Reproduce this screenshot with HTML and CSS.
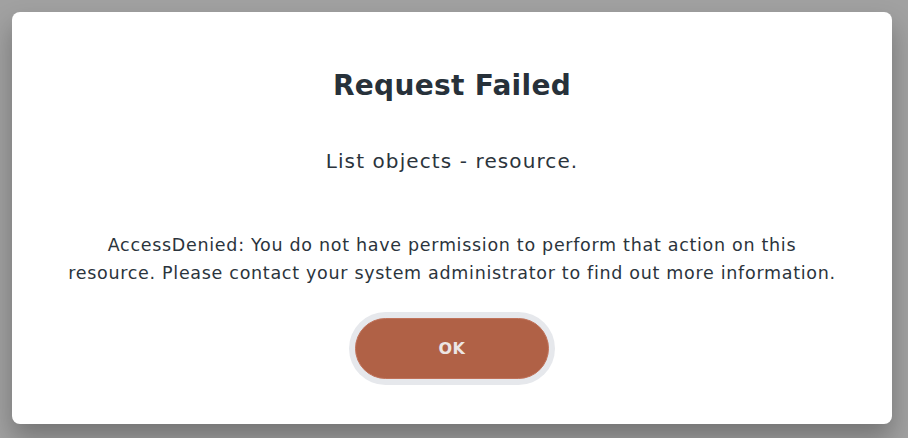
FILE: index.html
```html
<!DOCTYPE html>
<html lang="en">
<head>
<meta charset="utf-8">
<title>Request Failed</title>
<link rel="stylesheet" href="styles.css">
</head>
<body>
<div class="overlay">
  <div class="dialog" role="dialog">
    <h2 class="title">Request Failed</h2>
    <p class="subtitle">List objects - resource.</p>
    <p class="message">AccessDenied: You do not have permission to perform that action on this resource. Please contact your system administrator to find out more information.</p>
    <div class="actions">
      <button class="ok-btn" type="button">OK</button>
    </div>
  </div>
</div>
</body>
</html>
```
FILE: styles.css
```css
html, body {
  margin: 0;
  padding: 0;
  height: 100%;
}
body {
  background: #a1a1a1;
  font-family: "DejaVu Sans", "Open Sans", sans-serif;
  color: #2b343c;
  overflow: hidden;
}
.overlay {
  padding: 12px 16px 14px 12px;
  height: 100%;
  box-sizing: border-box;
}
.dialog {
  background: #ffffff;
  border-radius: 8px;
  height: 412px;
  box-sizing: border-box;
  box-shadow: 0 14px 26px rgba(0, 0, 0, 0.28);
  display: flex;
  flex-direction: column;
  align-items: center;
  padding: 54px 30px 0;
  text-align: center;
}
.title {
  margin: 0;
  font-size: 28px;
  font-weight: 700;
  line-height: 40px;
  letter-spacing: 0.3px;
  color: #27313a;
}
.subtitle {
  margin: 41px 0 0;
  font-size: 20px;
  line-height: 28px;
  letter-spacing: 1.1px;
}
.message {
  margin: 56px 0 0;
  font-size: 17.5px;
  line-height: 28px;
  letter-spacing: 0.7px;
  max-width: 782px;
}
.actions {
  margin-top: 31px;
}
.ok-btn {
  width: 194px;
  height: 61px;
  border-radius: 31px;
  border: 1px solid #c0725a;
  background: #b06146;
  color: #ece6e4;
  font-family: inherit;
  font-size: 16px;
  font-weight: 700;
  letter-spacing: 0.5px;
  box-shadow: 0 0 0 6px #e6e8ec;
  cursor: pointer;
}
```
